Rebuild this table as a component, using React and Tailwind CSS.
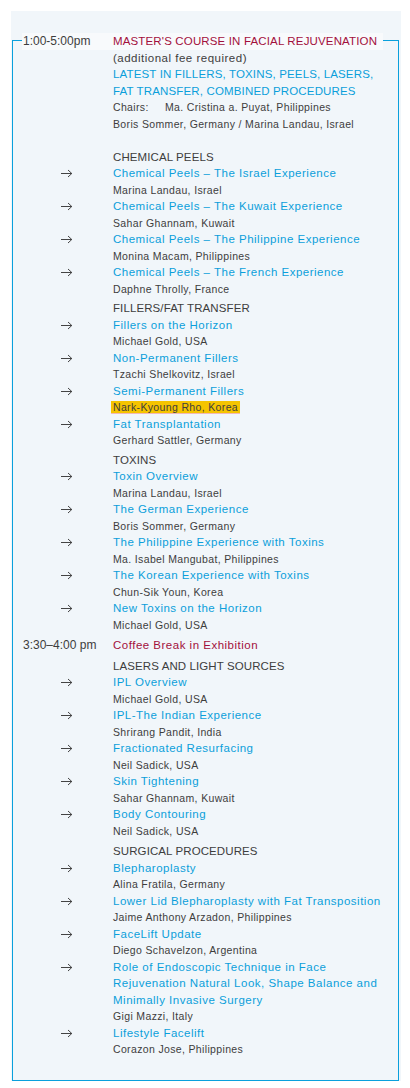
import React from 'react'

const blue = 'text-[#0b9fdb]'
const txt = 'text-[11.5px] tracking-[0.5px]'
const caps = 'text-[11.5px] tracking-[0.1px]'
const small = 'text-[10.5px] tracking-[0.35px] text-[#3d3d3d]'

const sections = [
  {
    heading: 'CHEMICAL PEELS',
    items: [
      ['Chemical Peels – The Israel Experience', 'Marina Landau, Israel'],
      ['Chemical Peels – The Kuwait Experience', 'Sahar Ghannam, Kuwait'],
      ['Chemical Peels – The Philippine Experience', 'Monina Macam, Philippines'],
      ['Chemical Peels – The French Experience', 'Daphne Throlly, France'],
    ],
  },
  {
    heading: 'FILLERS/FAT TRANSFER',
    items: [
      ['Fillers on the Horizon', 'Michael Gold, USA'],
      ['Non-Permanent Fillers', 'Tzachi Shelkovitz, Israel'],
      ['Semi-Permanent Fillers', 'Nark-Kyoung Rho, Korea', true],
      ['Fat Transplantation', 'Gerhard Sattler, Germany'],
    ],
  },
  {
    heading: 'TOXINS',
    items: [
      ['Toxin Overview', 'Marina Landau, Israel'],
      ['The German Experience', 'Boris Sommer, Germany'],
      ['The Philippine Experience with Toxins', 'Ma. Isabel Mangubat, Philippines'],
      ['The Korean Experience with Toxins', 'Chun-Sik Youn, Korea'],
      ['New Toxins on the Horizon', 'Michael Gold, USA'],
    ],
  },
]

const sections2 = [
  {
    heading: 'LASERS AND LIGHT SOURCES',
    gap: 'mt-[4px]',
    items: [
      ['IPL Overview', 'Michael Gold, USA'],
      ['IPL-The Indian Experience', 'Shrirang Pandit, India'],
      ['Fractionated Resurfacing', 'Neil Sadick, USA'],
      ['Skin Tightening', 'Sahar Ghannam, Kuwait'],
      ['Body Contouring', 'Neil Sadick, USA'],
    ],
  },
  {
    heading: 'SURGICAL PROCEDURES',
    gap: 'mt-[4px]',
    items: [
      ['Blepharoplasty', 'Alina Fratila, Germany'],
      ['Lower Lid Blepharoplasty with Fat Transposition', 'Jaime Anthony Arzadon, Philippines'],
      ['FaceLift Update', 'Diego Schavelzon, Argentina'],
      [
        'Role of Endoscopic Technique in Face Rejuvenation Natural Look, Shape Balance and Minimally Invasive Surgery',
        'Gigi Mazzi, Italy',
      ],
      ['Lifestyle Facelift', 'Corazon Jose, Philippines'],
    ],
  },
]

function Arrow() {
  return (
    <svg width="12" height="9" viewBox="0 0 12 9" className="mt-[4px]">
      <path d="M0 4.5h11M7 1l3.8 3.5L7 8" fill="none" stroke="#444" strokeWidth="1" />
    </svg>
  )
}

function Row({ left, children }) {
  return (
    <div className="flex">
      <div className="w-[100px] shrink-0">{left}</div>
      <div className="flex-1 pr-[8px]">{children}</div>
    </div>
  )
}

function Section({ heading, items, gap = 'mt-[3px]' }) {
  return (
    <div className={gap}>
      <Row>
        <div className={`${caps} text-[#3d3d3d]`}>{heading}</div>
      </Row>
      {items.map(([title, who, hl], i) => (
        <Row
          key={i}
          left={
            <div className="pl-[48px]">
              <Arrow />
            </div>
          }
        >
          <div className={`${txt} ${blue}`}>{title}</div>
          <div className={small}>
            {hl ? <span className="bg-[#f5c400] px-[2px] -ml-[2px] border-b border-[#f2b8b8]">{who}</span> : who}
          </div>
        </Row>
      ))}
    </div>
  )
}

export default function App() {
  return (
    <div className="bg-white min-h-[1088px] pt-[11px] pl-[11px] pr-[9px]" style={{ fontFamily: '"Liberation Sans", Arial, sans-serif' }}>
      <div className="bg-[#f1f6fa] pt-[29px] pl-[1px] pr-[2px]">
        <div className="border border-[#0aa0dc] pb-[22px] leading-[16.5px]">
          <div className="-mt-[8px] ml-[9px] flex w-fit bg-[#f8fafc] pr-[6px]">
            <div className="w-[91px] pl-[1px] text-[12px] text-[#3d3d3d]">1:00-5:00pm</div>
            <div className={`${caps} tracking-[0.15px] text-[#a3103c]`}>MASTER'S COURSE IN FACIAL REJUVENATION</div>
          </div>
          <Row>
            <div className={`${txt} text-[#3d3d3d]`}>(additional fee required)</div>
            <div className={`${caps} tracking-[0.15px] ${blue}`}>LATEST IN FILLERS, TOXINS, PEELS, LASERS, FAT TRANSFER, COMBINED PROCEDURES</div>
            <div className={`${small} flex`}>
              <span className="w-[52px]">Chairs:</span>
              <span>Ma. Cristina a. Puyat, Philippines</span>
            </div>
            <div className={small}>Boris Sommer, Germany / Marina Landau, Israel</div>
            <div className="h-[13.5px]" />
          </Row>
          {sections.map((s) => (
            <Section key={s.heading} {...s} />
          ))}
          <div className="mt-[4px]">
            <Row left={<div className="pl-[10px] text-[12px] text-[#3d3d3d]">3:30–4:00 pm</div>}>
              <div className={`${txt} text-[#a3103c]`}>Coffee Break in Exhibition</div>
            </Row>
          </div>
          {sections2.map((s) => (
            <Section key={s.heading} {...s} />
          ))}
        </div>
      </div>
    </div>
  )
}
